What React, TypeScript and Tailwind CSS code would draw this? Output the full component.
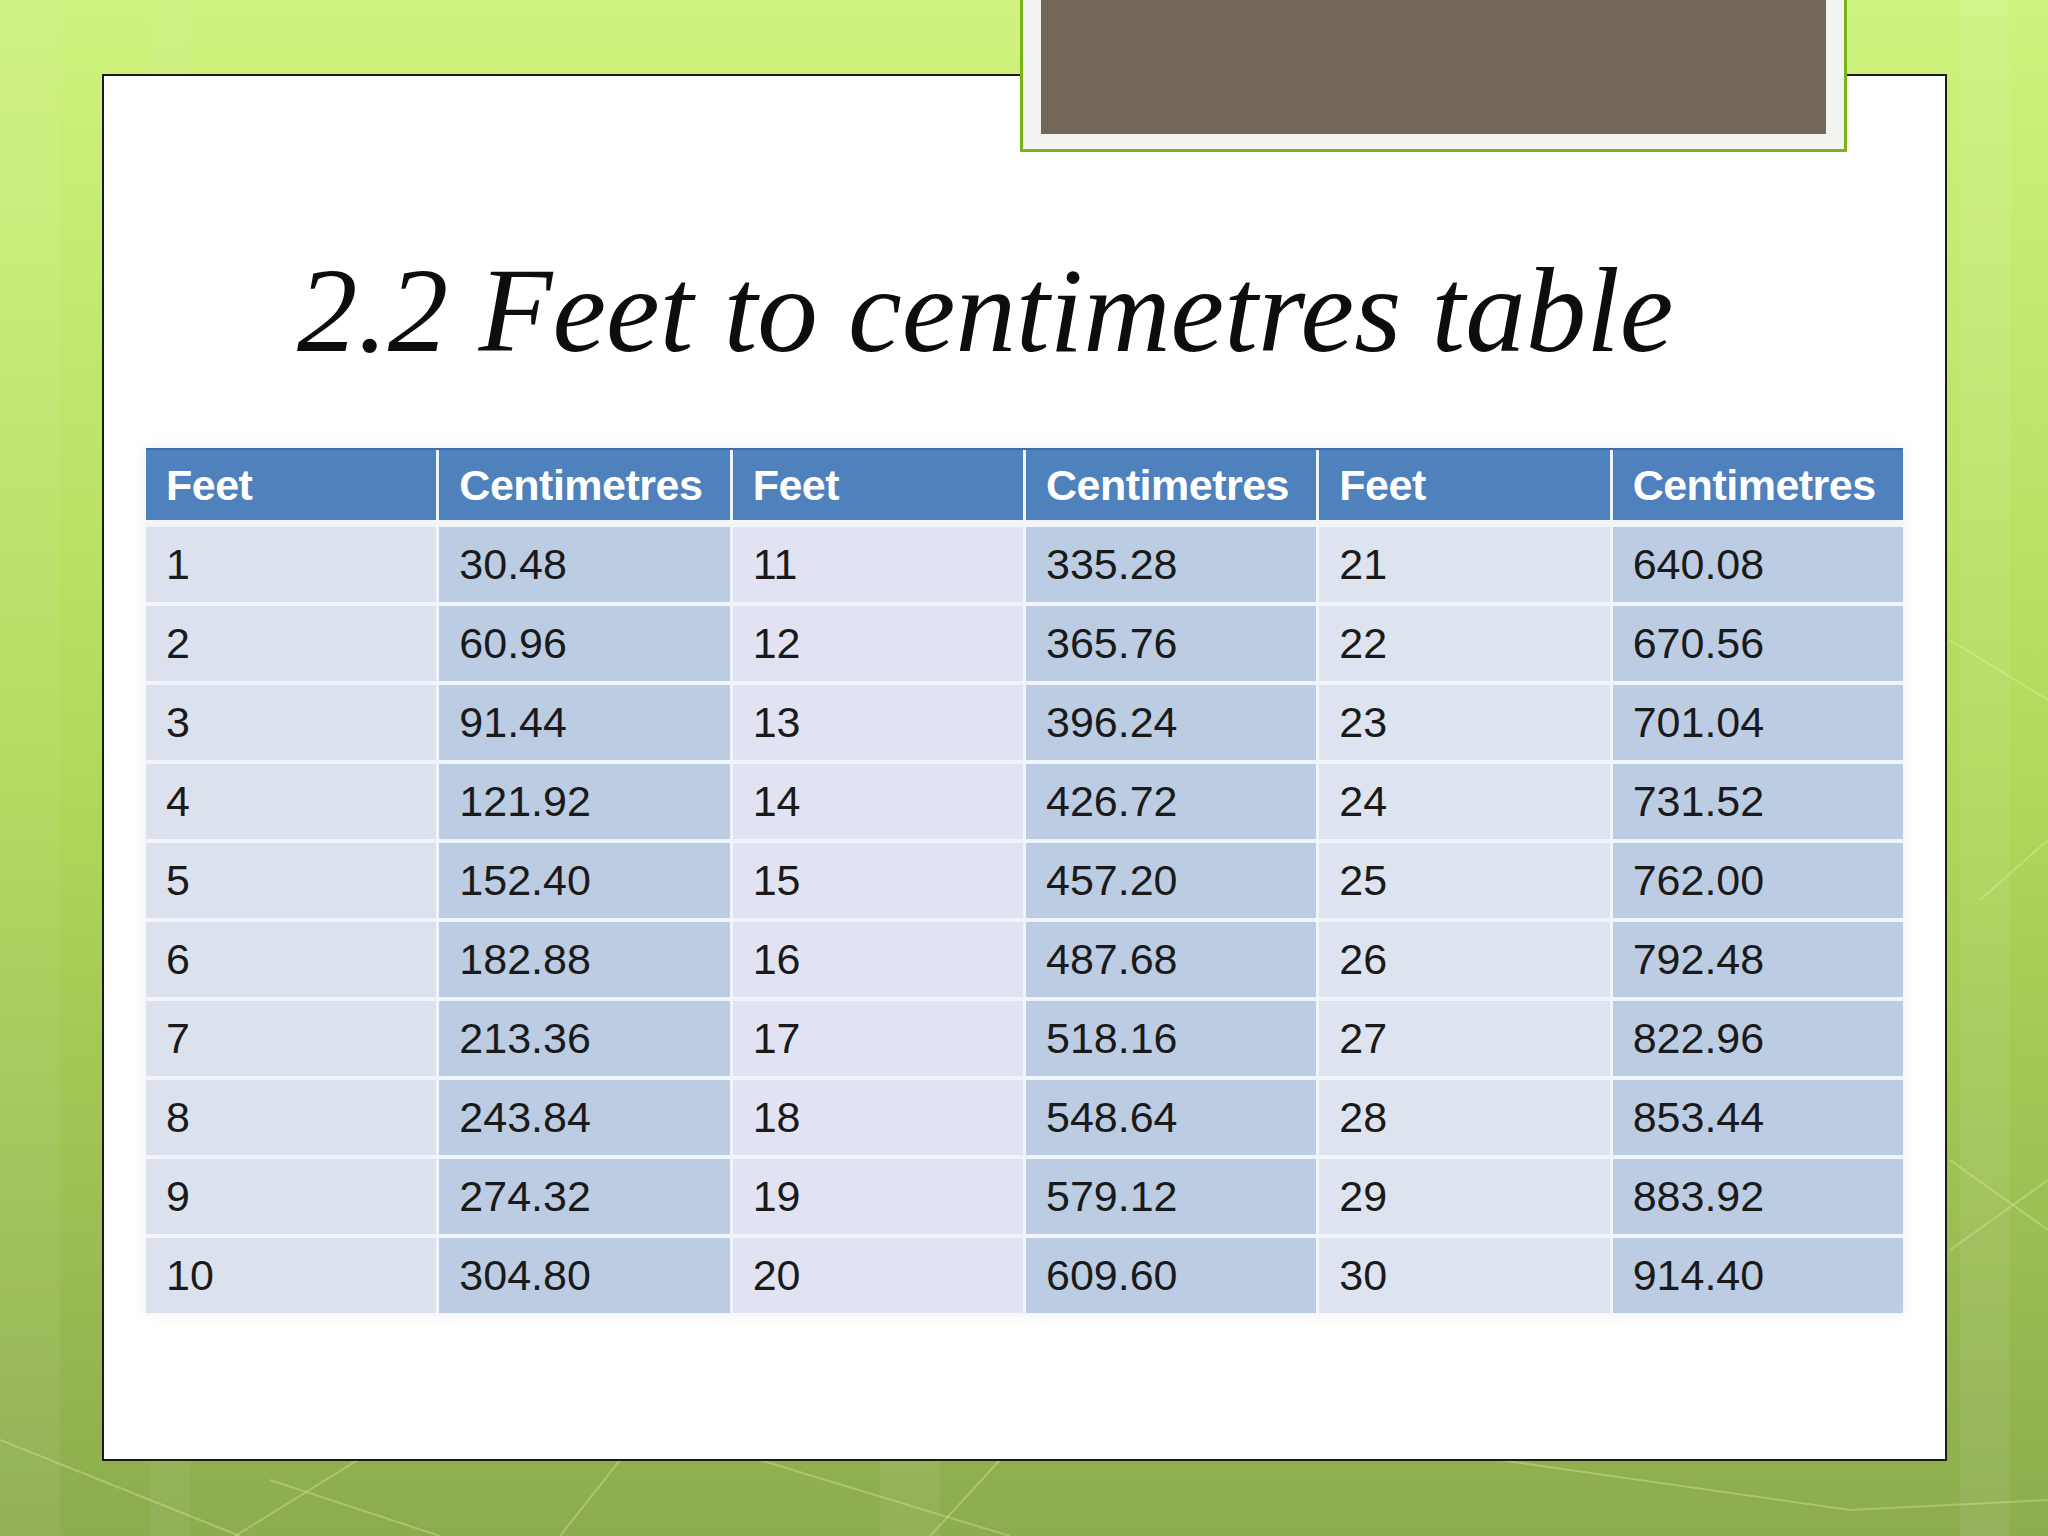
import React from 'react'

const rows = Array.from({ length: 10 }, (_, i) => i + 1)

const feetBg = ['bg-[#dbe2ee]', 'bg-[#e1e3f3]', 'bg-[#dde3ef]']

export default function App() {
  return (
    <div className="relative w-[2048px] h-[1536px] overflow-hidden bg-gradient-to-b from-[#cff37e] via-[#b2d95a] to-[#8dac4d]">
      {/* background decoration */}
      <svg className="absolute inset-0" width="2048" height="1536" viewBox="0 0 2048 1536">
        <rect x="0" y="0" width="60" height="1536" fill="rgba(255,255,255,0.06)" />
        <rect x="150" y="0" width="40" height="1536" fill="rgba(255,255,255,0.05)" />
        <rect x="1960" y="0" width="50" height="1536" fill="rgba(255,255,255,0.07)" />
        <rect x="880" y="1460" width="60" height="76" fill="rgba(255,255,255,0.06)" />
        <g stroke="rgba(240,255,200,0.28)" strokeWidth="2" fill="none">
          <line x1="0" y1="1440" x2="240" y2="1536" />
          <line x1="235" y1="1536" x2="390" y2="1440" />
          <line x1="270" y1="1480" x2="440" y2="1536" />
          <line x1="620" y1="1460" x2="560" y2="1536" />
          <line x1="760" y1="1460" x2="1010" y2="1536" />
          <line x1="930" y1="1536" x2="1000" y2="1460" />
          <line x1="1500" y1="1460" x2="1850" y2="1510" />
          <line x1="1850" y1="1510" x2="2048" y2="1500" />
          <line x1="1950" y1="1250" x2="2048" y2="1180" />
          <line x1="1950" y1="1160" x2="2048" y2="1230" />
          <line x1="1980" y1="900" x2="2048" y2="840" />
          <line x1="1950" y1="640" x2="2048" y2="700" />
        </g>
      </svg>

      <div className="relative pt-[74px] pl-[102px]">
        <div className="w-[1845px] h-[1387px] bg-white border-2 border-[#1b1b1b]">
          <h1 className="pt-[174px] pl-[193px] text-[121px] leading-none italic text-[#0d0d0d] [font-family:'Liberation_Serif',serif]">
            2.2 Feet to centimetres table
          </h1>

          <div className="mt-[77px] ml-[42px] w-[1757px] bg-[#f1f5fb] shadow-[0_0_14px_rgba(0,0,0,0.08)] [font-family:'Liberation_Sans',Arial,sans-serif]">
            <div className="grid grid-cols-6 gap-x-[3px] border-t-2 border-[#3f6ea8]">
              {['Feet', 'Centimetres', 'Feet', 'Centimetres', 'Feet', 'Centimetres'].map((h, i) => (
                <div key={i} className="h-[70px] flex items-center pl-[20px] bg-[#4f81bd] text-white font-bold text-[43px] tracking-[-0.5px]">
                  {h}
                </div>
              ))}
            </div>
            <div className="grid grid-cols-6 gap-x-[3px] gap-y-[4px] pt-[7px]">
              {rows.map((r) =>
                [0, 1, 2].map((c) => {
                  const feet = r + c * 10
                  const cm = (feet * 30.48).toFixed(2)
                  return (
                    <React.Fragment key={`${r}-${c}`}>
                      <div className={`h-[75px] flex items-center pl-[20px] text-[43px] text-[#1a1a1a] ${feetBg[c]}`}>
                        {feet}
                      </div>
                      <div className="h-[75px] flex items-center pl-[20px] text-[43px] text-[#1a1a1a] bg-[#bccce3]">
                        {cm}
                      </div>
                    </React.Fragment>
                  )
                })
              )}
            </div>
          </div>
        </div>
      </div>

      {/* picture frame at the top */}
      <div className="absolute left-[1020px] top-0 w-[827px] h-[152px] bg-[#f3f4f1] border-x-[3px] border-b-[3px] border-[#7ab317] px-[18px] pb-[15px]">
        <div className="h-full bg-[#716657]" />
      </div>
    </div>
  )
}
